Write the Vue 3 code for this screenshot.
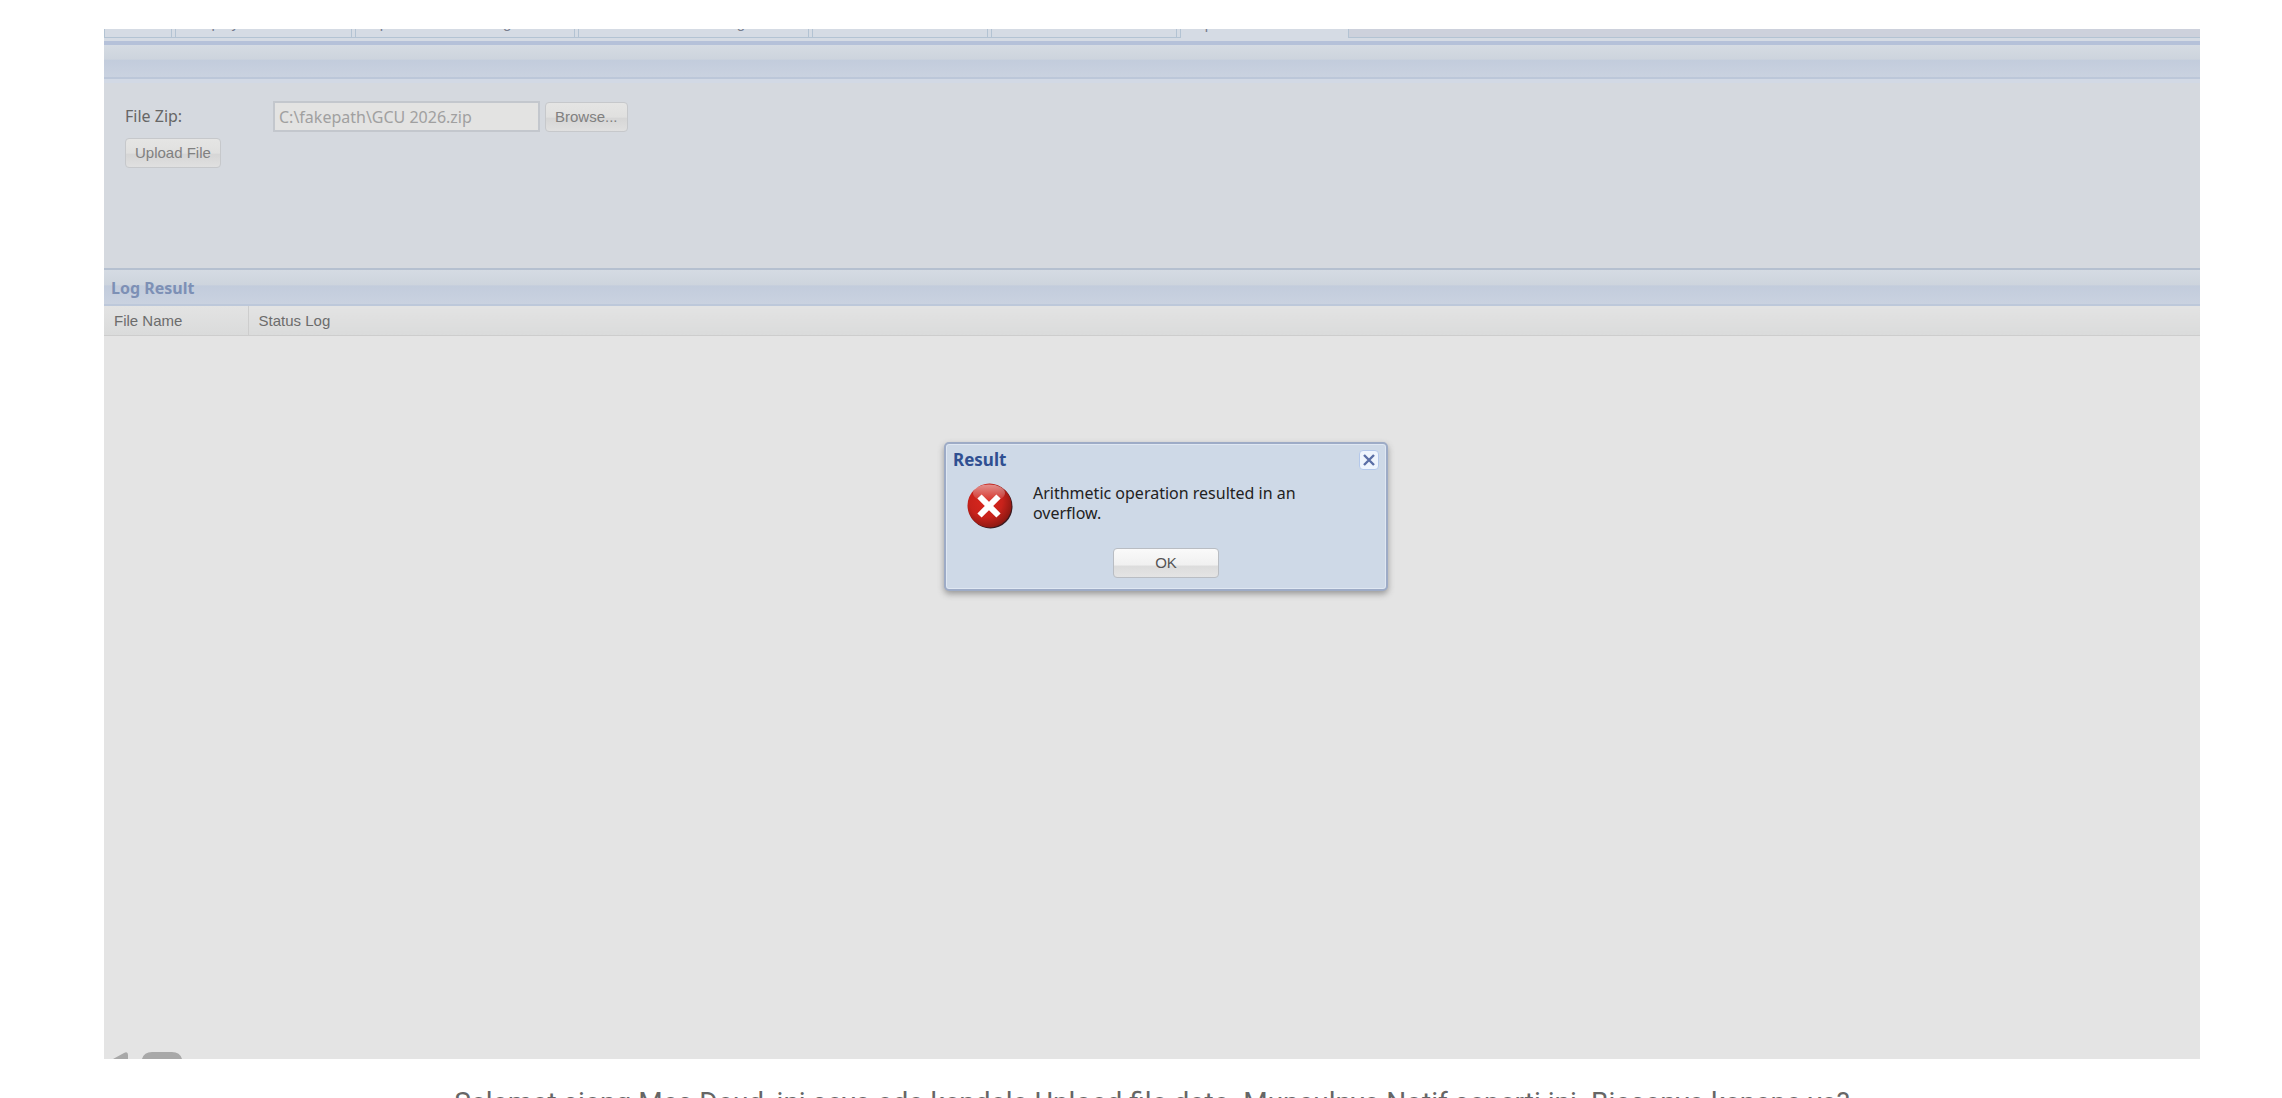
<script setup>
import { ref } from 'vue'

const tabs = ref([
  { label: 'Home', width: 68 },
  { label: 'Employee Data', width: 177 },
  { label: 'Upload Data Working Hours', width: 220 },
  { label: 'Absence Data Working Hours', width: 231 },
  { label: 'Master Schedule', width: 176 },
  { label: 'Attendance Detail', width: 186 },
  { label: 'Upload File', width: 169, active: true }
])
const fileName = ref('C:\\fakepath\\GCU 2026.zip')
</script>

<template>
  <main class="page">
    <section class="shot">
      <nav class="tabs">
        <a
          v-for="t in tabs"
          :key="t.label"
          href="#"
          class="tab"
          :class="{ active: t.active }"
          :style="{ width: t.width + 'px' }"
        >{{ t.label }}</a>
      </nav>
      <div class="strip"></div>
      <div class="bar top"></div>
      <form class="form" @submit.prevent>
        <div class="row">
          <label for="zip">File Zip:</label>
          <input id="zip" v-model="fileName" type="text" readonly />
          <button type="button" class="btn">Browse...</button>
        </div>
        <button type="submit" class="btn">Upload File</button>
      </form>
      <h2 class="bar log">Log Result</h2>
      <table class="grid">
        <thead>
          <tr><th class="name">File Name</th><th>Status Log</th></tr>
        </thead>
      </table>
      <div class="body"></div>
      <div class="pager">
        <svg width="80" height="7" viewBox="0 0 80 7">
          <path d="M9 7 L20 1 Q24 -1 24 3 V7Z M38 7 Q40 0 48 0 H68 Q76 0 78 7Z" fill="#a8a8a8" />
        </svg>
      </div>
      <div class="dialog" role="alertdialog" aria-labelledby="dlg-title">
        <header>
          <h3 id="dlg-title">Result</h3>
          <button type="button" class="close" aria-label="Close">
            <svg width="12" height="12" viewBox="0 0 12 12"><path d="M1 1 L11 11 M11 1 L1 11" stroke="#5a6ea6" stroke-width="2.400" /></svg>
          </button>
        </header>
        <div class="message">
          <svg class="icon" width="46" height="46" viewBox="0 0 46 46">
            <defs>
              <radialGradient id="red" cx="0.42" cy="0.4" r="0.62">
                <stop offset="0" stop-color="#d9261d" />
                <stop offset="0.6" stop-color="#c8221b" />
                <stop offset="1" stop-color="#8c1812" />
              </radialGradient>
              <linearGradient id="shine" x1="0" y1="0" x2="0" y2="1">
                <stop offset="0" stop-color="#fff" stop-opacity="0.5" />
                <stop offset="1" stop-color="#fff" stop-opacity="0.05" />
              </linearGradient>
            </defs>
            <circle cx="23.500" cy="23.500" r="22" fill="#3a1a20" />
            <circle cx="22.500" cy="22.500" r="22" fill="url(#red)" />
            <ellipse cx="22" cy="10" rx="16" ry="8.500" fill="url(#shine)" />
            <path d="M12.500 13.500 L31.500 32.500 M31.500 13.500 L12.500 32.500" stroke="#fff" stroke-width="6" />
          </svg>
          <p>Arithmetic operation resulted in an overflow.</p>
        </div>
        <button type="button" class="ok">OK</button>
      </div>
    </section>
    <p class="caption">Selamat siang Mas Daud, ini saya ada kendala Upload file data. Munculnya Notif seperti ini. Biasanya kenapa ya?</p>
  </main>
</template>

<style>
body { background: #fff; overflow: hidden; }
</style>

<style scoped>
* { box-sizing: border-box; }
.page {
  height: 100vh;
  padding: 29px 82px 0 104px;
  overflow: hidden;
  display: flex;
  flex-direction: column;
}
.shot {
  position: relative;
  flex: none;
  height: calc(100vh - 68px);
  display: flex;
  flex-direction: column;
  background: #e4e4e4;
  overflow: hidden;
  font-family: "Liberation Sans", sans-serif;
  font-size: 16px;
  color: #666;
}
.tabs {
  flex: none;
  display: flex;
  gap: 3px;
  height: 9px;
  background: #cdd1dc;
  border-bottom: 1px solid #b3c3d3;
}
.tab {
  flex: none;
  height: 8px;
  padding: 0 0 5px 13px;
  overflow: hidden;
  background: #d5dbe4;
  border: 1px solid #b3c3d3;
  border-width: 0 1px;
  box-shadow: 3px 0 #d5dbe4;
  color: #777d8c;
  font: 15px/18px "Liberation Sans", sans-serif;
  text-decoration: none;
  white-space: nowrap;
  display: flex;
  align-items: flex-end;
}
.tab.active { height: 9px; box-shadow: none; }
.strip {
  flex: none;
  height: 7px;
  background: #d5dbe4;
  border-bottom: 4px solid #b5c1d9;
}
.bar {
  flex: none;
  margin: 0;
  background: linear-gradient(#d5dbe3, #cdd4dd 45%, #c2ccdc 46%, #cad2e0);
}
.top { height: 34px; border-bottom: 2px solid #bcc7d9; }
.form {
  flex: none;
  height: 189px;
  padding: 22px 21px;
  display: flex;
  flex-direction: column;
  align-items: flex-start;
  gap: 6px;
  background: linear-gradient(#d2d9e5 4px, #d5d9df 4px);
}
.row { display: flex; align-items: center; }
.row label {
  width: 148px;
  padding-bottom: 2px;
  font: 16px/20px "Noto Sans", sans-serif;
}
.row input {
  width: 267px;
  height: 31px;
  margin-right: 5px;
  padding: 0 4px;
  border: 2px solid #c3c7cd;
  background: #e3e3e2;
  color: #a0a0a0;
  font: 16px/20px "Noto Sans", sans-serif;
}
.btn {
  height: 30px;
  padding: 0 9px;
  border: 1px solid #c6c8cb;
  border-radius: 4px;
  background: linear-gradient(#e5e5e4, #e0e0df 50%, #d6d6d6 55%, #e0e0e0);
  color: #808080;
  font: 15px/18px "Liberation Sans", sans-serif;
}
.log {
  height: 38px;
  padding: 0 7px;
  border-top: 2px solid #b5c0d0;
  border-bottom: 2px solid #bdc8da;
  color: #7d90b5;
  font: bold 16px/36px "Noto Sans", sans-serif;
}
.grid {
  flex: none;
  width: 100%;
  border-collapse: collapse;
}
.grid th {
  height: 29px;
  padding: 2px 9px 0 10px;
  border-bottom: 1px solid #cdcdcd;
  background: linear-gradient(#e3e3e3, #dadbdb);
  color: #6c6c6c;
  font: 15px/18px "Liberation Sans", sans-serif;
  text-align: left;
}
.grid .name { width: 144px; border-right: 1px solid #cdcdcd; }
.body { flex: 1; }
.pager { flex: none; height: 7px; display: flex; }
.dialog {
  position: absolute;
  top: 413px;
  left: calc(50% - 208px);
  width: 444px;
  height: 149px;
  border: 2px solid #9dabc6;
  border-radius: 5px;
  background: #ced9e7;
  box-shadow: inset 0 0 0 1px #dfe7f2, 0 3px 6px #999;
}
.dialog header {
  display: flex;
  align-items: center;
  justify-content: space-between;
  height: 32px;
  padding: 0 7px;
}
.dialog h3 {
  margin: 0;
  color: #2f4f91;
  font: bold 17px/20px "Noto Sans", sans-serif;
}
.close {
  width: 20px;
  height: 20px;
  padding: 0;
  border: 1px solid #b4c8ea;
  border-radius: 4px;
  background: #eef4fd;
  display: grid;
  place-items: center;
}
.message { display: flex; gap: 20px; padding: 7px 21px 5px; }
.message p {
  width: 290px;
  height: 60px;
  margin: 0;
  color: #222;
  font: 16px/20px "Noto Sans", sans-serif;
}
.ok {
  display: block;
  width: 106px;
  height: 30px;
  margin: 0 auto;
  border: 1px solid #b9bdc3;
  border-radius: 4px;
  background: linear-gradient(#fafafa, #f0f0f0 58%, #dcdcdc 60%, #e4e4e4);
  color: #555;
  font: 15px/18px "Liberation Sans", sans-serif;
}
.caption {
  flex: none;
  margin: 28px 0 0;
  color: #666;
  font: 28px/32px Roboto, sans-serif;
  text-align: center;
  white-space: nowrap;
}
</style>
